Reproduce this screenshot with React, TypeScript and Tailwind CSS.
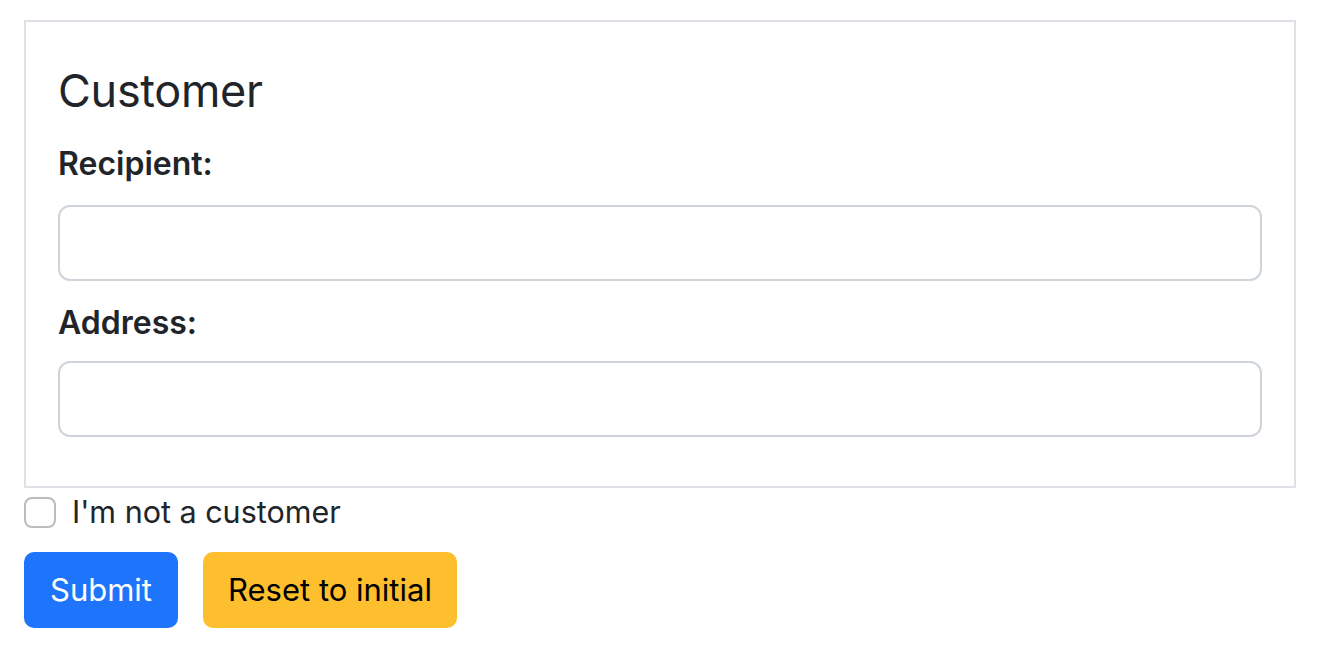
export default function App() {
  const font = { fontFamily: 'Inter, "Liberation Sans", sans-serif' };
  return (
    <div className="min-h-[650px] bg-white pt-[20px] px-[24px] text-[#212529]" style={font}>
      <div className="border-2 border-[#dee2e6] px-[32px] pt-[42px] pb-[49px]">
        <div className="text-[45px] leading-[1.2] mb-[22px] tracking-[-0.3px]">Customer</div>
        <div className="text-[32px] font-semibold leading-[48px] mb-[17px]">Recipient:</div>
        <div className="h-[76px] border-2 border-[#ced4da] rounded-[12px] bg-white"></div>
        <div className="text-[32px] font-semibold leading-[48px] mt-[18px] mb-[14px]">Address:</div>
        <div className="h-[76px] border-2 border-[#ced4da] rounded-[12px] bg-white"></div>
      </div>
      <div className="flex items-center h-[48px]">
        <div className="w-[32px] h-[31px] border-2 border-[#bcbcbc] rounded-[8px] bg-white"></div>
        <span className="ml-[16px] text-[30.5px] leading-[48px]">I'm not a customer</span>
      </div>
      <div className="flex gap-[25px] mt-[16px]">
        <button className="h-[76px] px-[26px] rounded-[10px] bg-[#1e74fb] text-white text-[31px]">Submit</button>
        <button className="h-[76px] px-[25px] rounded-[10px] bg-[#fdbf2e] text-black text-[31px]">Reset to initial</button>
      </div>
    </div>
  );
}
